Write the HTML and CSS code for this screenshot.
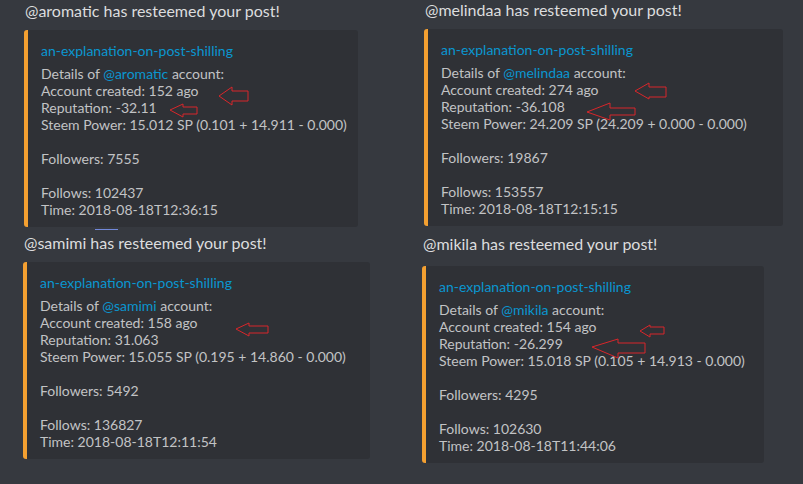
FILE: index.html
```html
<!DOCTYPE html>
<html>
<head>
<meta charset="utf-8">
<link rel="stylesheet" href="styles.css">
</head>
<body>
<div class="page">
  <div class="col col-left">
    <div class="msg msg-1">
      <div class="msg-title">@aromatic has resteemed your post!</div>
      <div class="embed embed-1">
        <div class="embed-link">an-explanation-on-post-shilling</div>
        <div class="embed-body">
          <div>Details of <span class="mention">@aromatic</span> account:</div>
          <div>Account created: 152 ago</div>
          <div>Reputation: -32.11</div>
          <div>Steem Power: 15.012 SP (0.101 + 14.911 - 0.000)</div>
          <div class="blank"></div>
          <div>Followers: 7555</div>
          <div class="blank"></div>
          <div>Follows: 102437</div>
          <div>Time: 2018-08-18T12:36:15</div>
        </div>
      </div>
    </div>
    <div class="sep"></div>
    <div class="msg msg-3">
      <div class="msg-title">@samimi has resteemed your post!</div>
      <div class="embed embed-3">
        <div class="embed-link">an-explanation-on-post-shilling</div>
        <div class="embed-body">
          <div>Details of <span class="mention">@samimi</span> account:</div>
          <div>Account created: 158 ago</div>
          <div>Reputation: 31.063</div>
          <div>Steem Power: 15.055 SP (0.195 + 14.860 - 0.000)</div>
          <div class="blank"></div>
          <div>Followers: 5492</div>
          <div class="blank"></div>
          <div>Follows: 136827</div>
          <div>Time: 2018-08-18T12:11:54</div>
        </div>
      </div>
    </div>
  </div>
  <div class="col col-right">
    <div class="msg msg-2">
      <div class="msg-title">@melindaa has resteemed your post!</div>
      <div class="embed embed-2">
        <div class="embed-link">an-explanation-on-post-shilling</div>
        <div class="embed-body">
          <div>Details of <span class="mention">@melindaa</span> account:</div>
          <div>Account created: 274 ago</div>
          <div>Reputation: -36.108</div>
          <div>Steem Power: 24.209 SP (24.209 + 0.000 - 0.000)</div>
          <div class="blank"></div>
          <div>Followers: 19867</div>
          <div class="blank"></div>
          <div>Follows: 153557</div>
          <div>Time: 2018-08-18T12:15:15</div>
        </div>
      </div>
    </div>
    <div class="msg msg-4">
      <div class="msg-title">@mikila has resteemed your post!</div>
      <div class="embed embed-4">
        <div class="embed-link">an-explanation-on-post-shilling</div>
        <div class="embed-body">
          <div>Details of <span class="mention">@mikila</span> account:</div>
          <div>Account created: 154 ago</div>
          <div>Reputation: -26.299</div>
          <div>Steem Power: 15.018 SP (0.105 + 14.913 - 0.000)</div>
          <div class="blank"></div>
          <div>Followers: 4295</div>
          <div class="blank"></div>
          <div>Follows: 102630</div>
          <div>Time: 2018-08-18T11:44:06</div>
        </div>
      </div>
    </div>
  </div>
  <svg class="arrows" width="803" height="484" viewBox="0 0 803 484">
    <polygon points="219,96 232,87 232,91 248,91 248,101 232,101 232,105"/>
    <polygon points="170,110 183,104 183,107 197,107 197,114 183,114 183,117"/>
    <polygon points="635,91 649,83 649,87 666,87 666,97 649,97 649,99"/>
    <polygon points="587,112 610,103 610,108 635,108 635,115 610,115 610,120"/>
    <polygon points="236,329 249,323 249,326 268,326 268,333 249,333 249,336"/>
    <polygon points="640,331 650,325 650,327 664,327 664,334 650,334 650,337"/>
    <polygon points="592,347 618,339 618,343 645,343 645,353 618,353 618,358"/>
  </svg>
</div>
</body>
</html>
```

FILE: styles.css
```css
html, body {
  margin: 0;
  padding: 0;
  background: #36393f;
}

body {
  font-family: Lato, "Open Sans", sans-serif;
  width: 803px;
  height: 484px;
  overflow: hidden;
}

.page {
  position: relative;
  display: flex;
  height: 484px;
}

.col {
  display: flex;
  flex-direction: column;
  box-sizing: border-box;
}

.col-left {
  width: 400px;
  padding-left: 24px;
}

.col-right {
  padding-left: 24px;
}

.msg-title {
  color: #dcddde;
  font-size: 16px;
  line-height: 20px;
  padding-left: 1px;
}

.msg-1 .msg-title { margin-top: 1px; }
.msg-1 .embed { margin-top: 9px; }

.sep {
  width: 23px;
  height: 1px;
  background: #7289da;
  margin: 2px 0 0 71px;
}

.msg-3 { margin-top: 3px; margin-left: -1px; }
.msg-3 .embed { margin-top: 9px; }

.msg-2 .embed { margin-top: 9px; }

.msg-4 { margin-top: 8px; margin-left: -2px; }
.msg-4 .embed { margin-top: 12px; }

.embed {
  background: #2f3136;
  border-left: 4px solid #f4a031;
  border-radius: 3px;
  padding: 12px 10px 9px 13px;
  box-sizing: border-box;
  font-size: 14px;
  line-height: 17px;
}

.embed-1 { width: 334px; }
.embed-2 { width: 359px; }
.embed-3 { width: 347px; }
.embed-4 { width: 342px; }

.embed-link {
  color: #0a96d0;
}

.embed-body {
  margin-top: 6px;
  color: #c2c3c5;
}

.mention {
  color: #0a96d0;
}

.blank {
  height: 17px;
}

.arrows {
  position: absolute;
  left: 0;
  top: 0;
  pointer-events: none;
}

.arrows polygon {
  fill: none;
  stroke: #d8262a;
  stroke-width: 1;
}
```
